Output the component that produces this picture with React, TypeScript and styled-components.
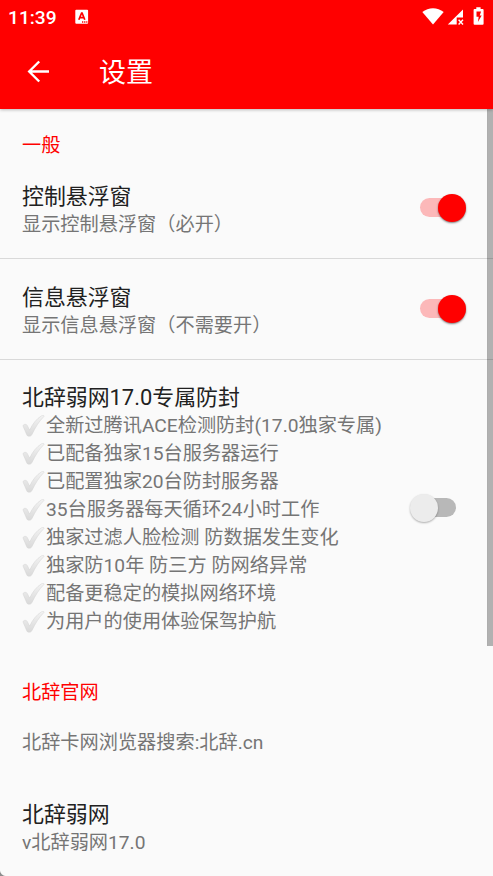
import React, { useId, useState } from "react";
import styled, { createGlobalStyle } from "styled-components";

const GlobalStyle = createGlobalStyle`
  * { box-sizing: border-box; }
  html, body { margin: 0; padding: 0; background: #fafafa; }
  body { overflow: hidden; }
`;

const Screen = styled.div`
  position: relative;
  width: 493px;
  height: 876px;
  overflow: hidden;
  background: #fafafa;
  font-family: Roboto, "Noto Sans CJK SC", sans-serif;
  color: #212121;
`;

const Header = styled.header`
  height: 109px;
  background: #ff0000;
  color: #fff;
  box-shadow: 0 1px 3px rgba(0, 0, 0, 0.26);
`;

const StatusBar = styled.div`
  display: flex;
  align-items: center;
  height: 34px;
  padding: 0 9px 0 8px;
`;

const Clock = styled.span`
  width: 67px;
  padding-top: 1px;
  font-size: 19.2px;
  font-weight: 500;
  line-height: 34px;
`;

const StatusIcons = styled.div`
  display: flex;
  align-items: center;
  margin-left: auto;
`;

const Toolbar = styled.div`
  display: flex;
  align-items: center;
  height: 75px;
  padding-left: 27px;
`;

const BackButton = styled.button`
  display: flex;
  width: 72px;
  padding: 0;
  border: 0;
  background: none;
  color: inherit;
`;

const PageTitle = styled.h1`
  margin: 0;
  padding-top: 2px;
  font-size: 27px;
  font-weight: 400;
  line-height: 36px;
`;

const List = styled.main`
  display: flex;
  flex-direction: column;
`;

const Category = styled.h2<{ $top: number; $height: number }>`
  height: ${(p) => p.$height}px;
  margin: 0;
  padding: ${(p) => p.$top}px 22px 0;
  font-size: 19.2px;
  font-weight: 400;
  line-height: 28px;
  color: #ff0000;
`;

const Row = styled.section<{ $height: number; $top: number; $divider?: boolean }>`
  display: flex;
  justify-content: space-between;
  height: ${(p) => p.$height}px;
  padding: ${(p) => p.$top}px 22px 0;
  border-bottom: ${(p) => (p.$divider ? "1px solid #d9d9d9" : "0")};
`;

const Title = styled.div`
  margin-bottom: 1px;
  font-size: 21.9px;
  line-height: 27px;
  white-space: nowrap;
`;

const Summary = styled.div`
  font-size: 19.2px;
  line-height: 28px;
  color: #757575;
  white-space: nowrap;
`;

const CheckLine = styled(Summary)`
  display: flex;
  align-items: center;
  height: 28px;
`;

const Toggle = styled.button<{ $offset: number }>`
  display: flex;
  width: 62px;
  height: 36px;
  margin: ${(p) => p.$offset}px -3px 0 0;
  padding: 0;
  border: 0;
  background: none;
`;

const Track = styled.span<{ $on: boolean }>`
  display: flex;
  align-items: center;
  justify-content: ${(p) => (p.$on ? "flex-end" : "flex-start")};
  width: 36px;
  height: 19px;
  margin: 8px 0 0 8px;
  border-radius: 10px;
  background: ${(p) => (p.$on ? "#fcb8b9" : "#b8b8b8")};
`;

const Thumb = styled.span<{ $on: boolean }>`
  flex: none;
  width: 28px;
  height: 28px;
  margin: 0 -10px;
  border-radius: 50%;
  background: ${(p) => (p.$on ? "#ff0000" : "#ececec")};
  box-shadow: 0 1px 2px rgba(0, 0, 0, ${(p) => (p.$on ? 0.5 : 0.3)});
`;

const ScrollThumb = styled.div`
  position: absolute;
  top: 109px;
  right: 0;
  width: 6px;
  height: 537px;
  background: rgba(0, 0, 0, 0.29);
  border-left: 1px solid rgba(0, 0, 0, 0.02);
`;

const Corner = styled.div`
  position: absolute;
  left: 0;
  bottom: 0;
  width: 6px;
  height: 6px;
  background: radial-gradient(circle at 100% 0, transparent 5.5px, #8c8c8c 6.5px);
`;

const CheckSvg = styled.svg`
  flex: none;
  margin-right: 1px;
`;

function Check() {
  const id = useId();
  return (
    <CheckSvg width="23" height="24" viewBox="0 0 23 24" aria-hidden="true">
      <defs>
        <linearGradient id={id} x1="0" y1="0" x2="0" y2="1">
          <stop offset="0" stopColor="#f3f3f3" />
          <stop offset="1" stopColor="#d9d9d9" />
        </linearGradient>
      </defs>
      <path
        d="M1.3 11.1C2.6 9.8 4.5 10.1 5.3 11.6L7.6 16.1C10.4 10.1 14.5 4.8 19.5 1.8C20.3 1.3 21.8 1.6 22 1.8C22.3 2 22 2.4 21.6 2.8C17 7.4 13.4 13.4 10.2 20.1C9.3 22 8.4 22.3 6.8 22.2C5.6 22.1 5 21.6 4.5 20.2L1.2 12.4C1 11.8 1 11.4 1.3 11.1Z"
        fill={`url(#${id})`}
        stroke="#d2d2d2"
        strokeWidth=".5"
      />
    </CheckSvg>
  );
}

function Switch({ initial, offset, label }: { initial: boolean; offset: number; label: string }) {
  const [on, setOn] = useState(initial);
  return (
    <Toggle $offset={offset} role="switch" aria-checked={on} aria-label={label} onClick={() => setOn(!on)}>
      <Track $on={on}>
        <Thumb $on={on} />
      </Track>
    </Toggle>
  );
}

const features = [
  "全新过腾讯ACE检测防封(17.0独家专属)",
  "已配备独家15台服务器运行",
  "已配置独家20台防封服务器",
  "35台服务器每天循环24小时工作",
  "独家过滤人脸检测 防数据发生变化",
  "独家防10年 防三方 防网络异常",
  "配备更稳定的模拟网络环境",
  "为用户的使用体验保驾护航",
];

export default function App() {
  return (
    <>
      <GlobalStyle />
      <Screen>
        <Header>
          <StatusBar>
            <Clock>11:39</Clock>
            <svg width="14" height="16" viewBox="0 0 14 16">
              <rect x=".3" y=".8" width="12.8" height="14" rx="1" fill="#fff" />
              <path d="M3.8 10.8 6.6 4h.5l2.7 6.8M4.9 8.6h4" fill="none" stroke="#f00" strokeWidth="1.7" />
              <path d="M7 13h1.3M9.1 13h1.3M11.2 13h1.2" stroke="#f00" strokeWidth="1.3" />
            </svg>
            <StatusIcons>
              <svg width="62" height="20" viewBox="0 0 62 20" fill="#fff">
                <path d="M.3 5C6.5-.1 15.5-.1 21.7 5L11 17.4Z" />
                <path d="M25.8 17.5 41 2.4v8h-6.3v7.1Z" />
                <path d="m36.6 12.8 4.4 4.6m0-4.6-4.4 4.6" stroke="#fff" strokeWidth="1.4" />
                <path
                  fillRule="evenodd"
                  d="M54.3.2h4.3v1.7h2q1 0 1 1v13.9q0 1-1 1h-8q-1 0-1-1V2.9q0-1 1-1h1.7ZM54.5 4.4v5.4h2.2l-.8 5.2 3.8-6.4h-2l1.4-4.2Z"
                />
              </svg>
            </StatusIcons>
          </StatusBar>
          <Toolbar>
            <BackButton aria-label="返回">
              <svg width="23" height="23" viewBox="0 0 23 23" fill="none" stroke="#fff" strokeWidth="2.4">
                <path d="M22 11.5H2.2M12.2 1.5l-10 10 10 10" />
              </svg>
            </BackButton>
            <PageTitle>设置</PageTitle>
          </Toolbar>
        </Header>
        <List>
          <Category $height={49} $top={23}>一般</Category>
          <Row $height={101} $top={25} $divider>
            <div>
              <Title>控制悬浮窗</Title>
              <Summary>显示控制悬浮窗（必开）</Summary>
            </div>
            <Switch initial={true} offset={7} label="控制悬浮窗" />
          </Row>
          <Row $height={101} $top={25} $divider>
            <div>
              <Title>信息悬浮窗</Title>
              <Summary>显示信息悬浮窗（不需要开）</Summary>
            </div>
            <Switch initial={true} offset={7} label="信息悬浮窗" />
          </Row>
          <Row $height={301} $top={24}>
            <div>
              <Title>北辞弱网17.0专属防封</Title>
              {features.map((text) => (
                <CheckLine key={text}>
                  <Check />
                  {text}
                </CheckLine>
              ))}
            </div>
            <Switch initial={false} offset={106} label="北辞弱网17.0专属防封" />
          </Row>
          <Category $height={46} $top={18}>北辞官网</Category>
          <Row $height={70} $top={22}>
            <Summary>北辞卡网浏览器搜索:北辞.cn</Summary>
          </Row>
          <Row $height={100} $top={24}>
            <div>
              <Title>北辞弱网</Title>
              <Summary>v北辞弱网17.0</Summary>
            </div>
          </Row>
        </List>
        <ScrollThumb />
        <Corner />
      </Screen>
    </>
  );
}
